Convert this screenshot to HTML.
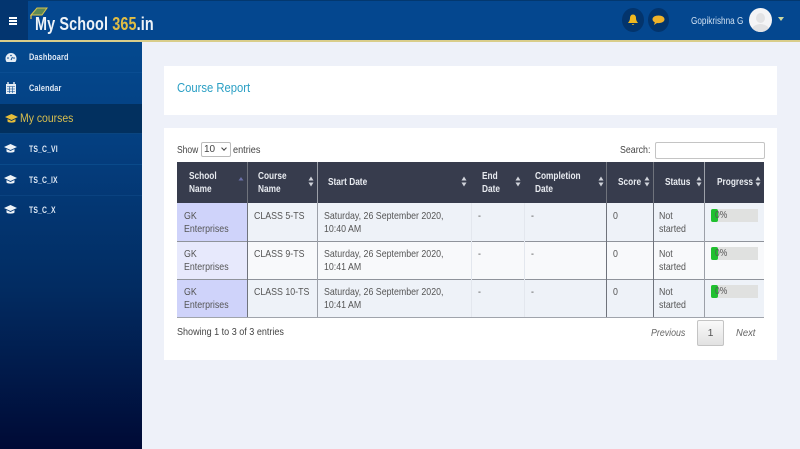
<!DOCTYPE html>
<html><head><meta charset="utf-8"><style>
html,body{margin:0;padding:0;width:800px;height:449px;overflow:hidden;background:#eef1f9;font-family:"Liberation Sans",sans-serif;color:#444}
.a{position:absolute;white-space:nowrap}
.line{position:absolute;width:1px}
.h{position:absolute;color:#e8ebf0;font-weight:bold;font-size:10.5px;line-height:13px;white-space:nowrap;transform:scaleX(.79);transform-origin:0 0}
.c{position:absolute;font-size:10.5px;line-height:13px;color:#555;white-space:nowrap;transform:scaleX(.84);transform-origin:0 0}
.s{position:absolute;width:6px;height:11px}
.side{position:absolute;left:29px;color:#dfe9f5;font-size:9.5px;font-weight:bold;letter-spacing:.2px;white-space:nowrap;transform:scaleX(.77);transform-origin:0 0}
</style></head><body>
<!-- sidebar -->
<div class="a" style="left:0;top:40px;width:142px;height:409px;background:linear-gradient(#04498f 0%,#043f80 25%,#022c62 60%,#000a35 100%)"></div>
<!-- header -->
<div class="a" style="left:0;top:0;width:800px;height:40px;background:#04478f;border-top:1px solid #03386f;box-sizing:border-box"></div>
<div class="a" style="left:0;top:0;width:28px;height:40px;background:#03356f"></div>
<div class="a" style="left:0;top:40px;width:800px;height:2px;background:#d9cd8a"></div>
<div class="a" style="left:9px;top:17px;width:8px;height:1.5px;background:#fff;box-shadow:0 3px 0 #fff,0 6px 0 #fff"></div>
<svg class="a" style="left:29px;top:7px" width="20" height="14" viewBox="0 0 20 14"><path d="M2 8 8 1h10l-5 7z" fill="#5e8a55" stroke="#d8c24a" stroke-width="1"/><path d="M2 8v4" stroke="#e2c84d" stroke-width="1.2"/></svg>
<div class="a" style="left:35px;top:14px;font-size:18px;font-weight:bold;color:#eef3f8;line-height:20px;letter-spacing:.15px;transform:scaleX(.8);transform-origin:0 0">My School <span style="color:#e0bd45">365</span>.in</div>
<!-- header right -->
<div class="a" style="left:622px;top:8px;width:22px;height:24px;border-radius:50%;background:#03346c"></div>
<svg class="a" style="left:627px;top:14px" width="12" height="12" viewBox="0 0 12 12"><path d="M6 .5C4 .5 3 2.2 3 4c0 3-1.500 4-2 5h10c-.5-1-2-2-2-5C9 2.200 8 .5 6 .5zM4.700 10a1.400 1.400 0 0 0 2.600 0z" fill="#f0b81f"/></svg>
<div class="a" style="left:648px;top:8px;width:21px;height:24px;border-radius:50%;background:#03346c"></div>
<svg class="a" style="left:652px;top:15px" width="13" height="11" viewBox="0 0 13 11"><path d="M6.500.5C3 .5.500 2 .500 4.300c0 1.400 1 2.500 2.300 3.100L2 10l3-2c.5.100 1 .1 1.500.1 3.500 0 6-1.500 6-3.800S10 .5 6.500.5z" fill="#f0b32a"/></svg>
<div class="a" style="left:691px;top:15px;font-size:10.5px;color:#cfe0f2;line-height:13px;transform:scaleX(.78);transform-origin:0 0">Gopikrishna G</div>
<div class="a" style="left:749px;top:8px;width:23px;height:24px;border-radius:50%;background:#f4f4f6;overflow:hidden"><div class="a" style="left:7px;top:5px;width:9px;height:10px;border-radius:50%;background:#e2e2e4"></div><div class="a" style="left:3px;top:16px;width:17px;height:12px;border-radius:50%;background:#e2e2e4"></div></div>
<div class="a" style="left:778px;top:17px;width:0;height:0;border-left:3px solid transparent;border-right:3px solid transparent;border-top:4px solid #cdd8a0"></div>
<!-- sidebar items -->
<svg class="a" style="left:5px;top:52px" width="12" height="11" viewBox="0 0 12 11"><path d="M6 1a5.500 5.500 0 0 0-5.500 5.500c0 1.500.5 2.700 1.200 3.500h8.600c.7-.8 1.200-2 1.200-3.500A5.500 5.500 0 0 0 6 1z" fill="#e5edf5"/><circle cx="3" cy="6" r=".8" fill="#04488f"/><circle cx="6" cy="3.500" r=".8" fill="#04488f"/><circle cx="9" cy="6" r=".8" fill="#04488f"/><path d="M6 8 7.500 5" stroke="#04488f"/></svg>
<div class="side" style="top:52px;line-height:12px">Dashboard</div>
<div class="a" style="left:0;top:72px;width:142px;height:1px;background:#0a4d92"></div>
<svg class="a" style="left:6px;top:82px" width="10" height="12" viewBox="0 0 10 12"><path d="M0 2h10v10H0z" fill="#e5edf5"/><path d="M2 0v3M8 0v3" stroke="#e5edf5" stroke-width="1.400"/><path d="M1 4.500h8M1 7h8M1 9.500h8M3.500 4.500V11M6.500 4.500V11" stroke="#04488f" stroke-width=".6"/></svg>
<div class="side" style="top:83px;line-height:12px">Calendar</div>
<div class="a" style="left:0;top:104px;width:142px;height:30px;background:#02305f;border-bottom:1px solid #0a4580;box-sizing:border-box"></div>
<svg class="a" style="left:5px;top:114px" width="13" height="10" viewBox="0 0 13 10"><path d="M6.500 0 13 3 6.500 6 0 3z" fill="#e6bd3a"/><path d="M2.500 5v2.500c1 1.500 7 1.500 8 0V5L6.500 7z" fill="#e6bd3a"/></svg>
<div class="a" style="left:20px;top:111px;font-size:12px;color:#d9bf4e;line-height:14px;transform:scaleX(.87);transform-origin:0 0">My courses</div>
<svg class="a" style="left:4px;top:144px" width="13" height="10" viewBox="0 0 13 10"><path d="M6.500 0 13 3 6.500 6 0 3z" fill="#eef3f8"/><path d="M2.500 5v2.500c1 1.500 7 1.500 8 0V5L6.500 7z" fill="#eef3f8"/></svg>
<div class="side" style="top:144px;line-height:12px;transform:scaleX(.72)">TS_C_VI</div>
<div class="a" style="left:0;top:164px;width:142px;height:1px;background:#0a4a8a"></div>
<svg class="a" style="left:4px;top:175px" width="13" height="10" viewBox="0 0 13 10"><path d="M6.500 0 13 3 6.500 6 0 3z" fill="#eef3f8"/><path d="M2.500 5v2.500c1 1.500 7 1.500 8 0V5L6.500 7z" fill="#eef3f8"/></svg>
<div class="side" style="top:175px;line-height:12px;transform:scaleX(.72)">TS_C_IX</div>
<div class="a" style="left:0;top:195px;width:142px;height:1px;background:#0a4280"></div>
<svg class="a" style="left:4px;top:205px" width="13" height="10" viewBox="0 0 13 10"><path d="M6.500 0 13 3 6.500 6 0 3z" fill="#eef3f8"/><path d="M2.500 5v2.500c1 1.500 7 1.500 8 0V5L6.500 7z" fill="#eef3f8"/></svg>
<div class="side" style="top:205px;line-height:12px;transform:scaleX(.72)">TS_C_X</div>
<!-- cards -->
<div class="a" style="left:164px;top:66px;width:613px;height:49px;background:#fff"></div>
<div class="a" style="left:177px;top:81px;font-size:12.5px;color:#2a9fc4;line-height:15px;transform:scaleX(.9);transform-origin:0 0">Course Report</div>
<div class="a" style="left:164px;top:128px;width:613px;height:232px;background:#fff"></div>
<div class="a" style="left:177px;top:144px;font-size:10.500px;line-height:12px;color:#444;transform:scaleX(.81);transform-origin:0 0">Show</div>
<div class="a" style="left:201px;top:142px;width:30px;height:15px;border:1px solid #bbb;border-radius:2px;box-sizing:border-box;font-size:10px;line-height:14px;padding-left:2px;color:#444">10<span style="position:absolute;left:20px;top:3px;width:3px;height:3px;border-right:1px solid #444;border-bottom:1px solid #444;transform:rotate(45deg)"></span></div>
<div class="a" style="left:233px;top:144px;font-size:10.500px;line-height:12px;color:#444;transform:scaleX(.87);transform-origin:0 0">entries</div>
<div class="a" style="left:620px;top:144px;font-size:10.500px;line-height:12px;color:#444;transform:scaleX(.84);transform-origin:0 0">Search:</div>
<div class="a" style="left:655px;top:142px;width:110px;height:17px;border:1px solid #c4c4c4;border-radius:2px;box-sizing:border-box;background:#fff"></div>
<!-- table -->
<div class="a" style="left:177px;top:162px;width:587px;height:41px;background:#373c4d"></div>
<div class="a" style="left:177px;top:203px;width:587px;height:38px;background:#eef2f8"></div>
<div class="a" style="left:177px;top:241px;width:587px;height:38px;background:#f8f9fb"></div>
<div class="a" style="left:177px;top:279px;width:587px;height:38px;background:#eef2f8"></div>
<div class="a" style="left:177px;top:203px;width:70px;height:38px;background:#cfd3fa"></div>
<div class="a" style="left:177px;top:241px;width:70px;height:38px;background:#e7e9fc"></div>
<div class="a" style="left:177px;top:279px;width:70px;height:38px;background:#cfd3fa"></div>
<div class="a" style="left:177px;top:241px;width:587px;height:1px;background:#8f939b"></div>
<div class="a" style="left:177px;top:279px;width:587px;height:1px;background:#8f939b"></div>
<div class="a" style="left:177px;top:317px;width:587px;height:1px;background:#a0a4ac"></div>
<div class="line" style="left:247px;top:162px;height:155px;background:#6f737c"></div>
<div class="line" style="left:317px;top:162px;height:155px;background:#9ca0a8"></div>
<div class="line" style="left:471px;top:203px;height:114px;background:#e3e7ee"></div>
<div class="line" style="left:524px;top:203px;height:114px;background:#e3e7ee"></div>
<div class="line" style="left:606px;top:162px;height:155px;background:#6f737c"></div>
<div class="line" style="left:653px;top:162px;height:155px;background:#6f737c"></div>
<div class="line" style="left:704px;top:162px;height:155px;background:#9ca0a8"></div>
<!-- header cells -->
<div class="h" style="left:189px;top:170px">School<br>Name</div>
<div class="h" style="left:258px;top:170px">Course<br>Name</div>
<div class="h" style="left:328px;top:176px">Start Date</div>
<div class="h" style="left:482px;top:170px">End<br>Date</div>
<div class="h" style="left:535px;top:170px">Completion<br>Date</div>
<div class="h" style="left:618px;top:176px">Score</div>
<div class="h" style="left:665px;top:176px">Status</div>
<div class="h" style="left:717px;top:176px">Progress</div>
<!-- sort icons -->
<svg class="s" style="left:238px;top:176px" viewBox="0 0 6 11"><path d="M3 1 5.500 4.500h-5z" fill="#6a70a8"/></svg>
<svg class="s" style="left:308px;top:176px" viewBox="0 0 6 11"><path d="M3 .5 5.500 4.500h-5zM3 10.500.5 6.500h5z" fill="#d0d3da"/></svg>
<svg class="s" style="left:461px;top:176px" viewBox="0 0 6 11"><path d="M3 .5 5.500 4.500h-5zM3 10.500.5 6.500h5z" fill="#d0d3da"/></svg>
<svg class="s" style="left:515px;top:176px" viewBox="0 0 6 11"><path d="M3 .5 5.500 4.500h-5zM3 10.500.5 6.500h5z" fill="#d0d3da"/></svg>
<svg class="s" style="left:598px;top:176px" viewBox="0 0 6 11"><path d="M3 .5 5.500 4.500h-5zM3 10.500.5 6.500h5z" fill="#d0d3da"/></svg>
<svg class="s" style="left:644px;top:176px" viewBox="0 0 6 11"><path d="M3 .5 5.500 4.500h-5zM3 10.500.5 6.500h5z" fill="#d0d3da"/></svg>
<svg class="s" style="left:696px;top:176px" viewBox="0 0 6 11"><path d="M3 .5 5.500 4.500h-5zM3 10.500.5 6.500h5z" fill="#d0d3da"/></svg>
<svg class="s" style="left:755px;top:176px" viewBox="0 0 6 11"><path d="M3 .5 5.500 4.500h-5zM3 10.500.5 6.500h5z" fill="#d0d3da"/></svg>
<!-- row 1 -->
<div class="c" style="left:184px;top:210px">GK<br>Enterprises</div>
<div class="c" style="left:254px;top:210px">CLASS 5-TS</div>
<div class="c" style="left:324px;top:210px">Saturday, 26 September 2020,<br>10:40 AM</div>
<div class="c" style="left:478px;top:210px">-</div>
<div class="c" style="left:531px;top:210px">-</div>
<div class="c" style="left:613px;top:210px">0</div>
<div class="c" style="left:659px;top:210px">Not<br>started</div>
<div class="a" style="left:711px;top:209px;width:47px;height:13px;background:#e0e1e0"></div>
<div class="a" style="left:711px;top:209px;width:7px;height:13px;background:#1fc02f;border-radius:2px"></div>
<div class="a" style="left:715px;top:209px;font-size:10.500px;line-height:13px;color:#555;transform:scaleX(.81);transform-origin:0 0">0%</div>
<!-- row 2 -->
<div class="c" style="left:184px;top:248px">GK<br>Enterprises</div>
<div class="c" style="left:254px;top:248px">CLASS 9-TS</div>
<div class="c" style="left:324px;top:248px">Saturday, 26 September 2020,<br>10:41 AM</div>
<div class="c" style="left:478px;top:248px">-</div>
<div class="c" style="left:531px;top:248px">-</div>
<div class="c" style="left:613px;top:248px">0</div>
<div class="c" style="left:659px;top:248px">Not<br>started</div>
<div class="a" style="left:711px;top:247px;width:47px;height:13px;background:#e0e1e0"></div>
<div class="a" style="left:711px;top:247px;width:7px;height:13px;background:#1fc02f;border-radius:2px"></div>
<div class="a" style="left:715px;top:247px;font-size:10.500px;line-height:13px;color:#555;transform:scaleX(.81);transform-origin:0 0">0%</div>
<!-- row 3 -->
<div class="c" style="left:184px;top:286px">GK<br>Enterprises</div>
<div class="c" style="left:254px;top:286px">CLASS 10-TS</div>
<div class="c" style="left:324px;top:286px">Saturday, 26 September 2020,<br>10:41 AM</div>
<div class="c" style="left:478px;top:286px">-</div>
<div class="c" style="left:531px;top:286px">-</div>
<div class="c" style="left:613px;top:286px">0</div>
<div class="c" style="left:659px;top:286px">Not<br>started</div>
<div class="a" style="left:711px;top:285px;width:47px;height:13px;background:#e0e1e0"></div>
<div class="a" style="left:711px;top:285px;width:7px;height:13px;background:#1fc02f;border-radius:2px"></div>
<div class="a" style="left:715px;top:285px;font-size:10.500px;line-height:13px;color:#555;transform:scaleX(.81);transform-origin:0 0">0%</div>
<!-- footer -->
<div class="a" style="left:177px;top:326px;font-size:10.500px;line-height:13px;color:#444;transform:scaleX(.86);transform-origin:0 0">Showing 1 to 3 of 3 entries</div>
<div class="a" style="left:651px;top:327px;font-size:10.500px;line-height:13px;color:#666;font-style:italic;transform:scaleX(.84);transform-origin:0 0">Previous</div>
<div class="a" style="left:697px;top:320px;width:27px;height:26px;box-sizing:border-box;border:1px solid #c4c4c4;border-radius:2px;background:linear-gradient(#fafafa,#e2e2e2);font-size:10.500px;line-height:24px;text-align:center;color:#555">1</div>
<div class="a" style="left:736px;top:327px;font-size:10.500px;line-height:13px;color:#666;font-style:italic;transform:scaleX(.9);transform-origin:0 0">Next</div>
</body></html>
